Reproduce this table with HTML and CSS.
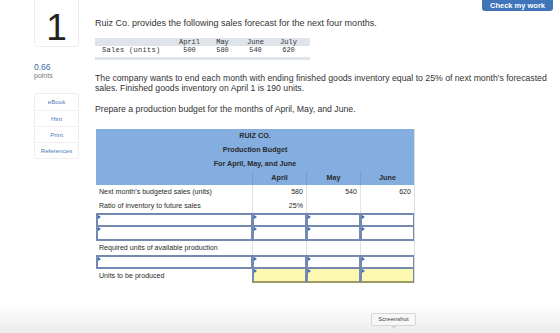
FILE: index.html
```html
<!DOCTYPE html>
<html>
<head>
<meta charset="utf-8">
<link rel="stylesheet" href="styles.css">
</head>
<body>
<div class="page">
  <aside class="side">
    <div class="qnum">1</div>
    <div class="score">0.66</div>
    <div class="pts">points</div>
    <div class="tools">
      <div class="tool">eBook</div>
      <div class="tool">Hint</div>
      <div class="tool">Print</div>
      <div class="tool">References</div>
    </div>
  </aside>
  <main class="main">
    <div class="topbar"><div class="check">Check my work</div></div>
    <p class="p1">Ruiz Co. provides the following sales forecast for the next four months.</p>
    <div class="sales">
      <div class="srow shead"><span></span><span>April</span><span>May</span><span>June</span><span>July</span></div>
      <div class="srow"><span class="sl">Sales (units)</span><span>500</span><span>580</span><span>540</span><span>620</span></div>
      <div class="sbar"></div>
    </div>
    <p class="p2">The company wants to end each month with ending finished goods inventory equal to 25% of next month's forecasted sales. Finished goods inventory on April 1 is 190 units.</p>
    <p class="p3">Prepare a production budget for the months of April, May, and June.</p>
    <div class="budget">
      <div class="title">RUIZ CO.</div>
      <div class="title">Production Budget</div>
      <div class="title">For April, May, and June</div>
      <div class="brow bhead"><div class="c lab"></div><div class="c">April</div><div class="c">May</div><div class="c">June</div></div>
      <div class="brow"><div class="c lab">Next month's budgeted sales (units)</div><div class="c num">580</div><div class="c num">540</div><div class="c num">620</div></div>
      <div class="brow"><div class="c lab">Ratio of inventory to future sales</div><div class="c num">25%</div><div class="c"></div><div class="c"></div></div>
      <div class="brow"><div class="c lab inp"></div><div class="c inp"></div><div class="c inp"></div><div class="c inp"></div></div>
      <div class="brow"><div class="c lab inp"></div><div class="c inp"></div><div class="c inp"></div><div class="c inp"></div></div>
      <div class="brow"><div class="c lab">Required units of available production</div><div class="c"></div><div class="c"></div><div class="c"></div></div>
      <div class="brow"><div class="c lab inp"></div><div class="c inp"></div><div class="c inp"></div><div class="c inp"></div></div>
      <div class="brow"><div class="c lab">Units to be produced</div><div class="c inp yel"></div><div class="c inp yel"></div><div class="c inp yel"></div></div>
    </div>
  </main>
</div>
<div class="fade"></div>
<div class="shot">Screenshot</div>
</body>
</html>
```

FILE: styles.css
```css
* { box-sizing: border-box; }
html, body { margin: 0; padding: 0; background: #fff; }
body { font-family: "Liberation Sans", Arial, sans-serif; color: #333; width: 560px; height: 333px; overflow: hidden; }
.page { display: flex; }
.side { width: 95px; flex: none; padding-left: 34px; }
.qnum {
  width: 45px; height: 54px; margin-top: -7px;
  border: 1px solid #eee; border-radius: 4px;
  font-size: 37px; line-height: 52px; text-align: center; color: #222;
  padding-top: 8px;
}
.score { margin-top: 15px; font-size: 8.5px; color: #3a6aa5; line-height: 10px; }
.pts { font-size: 7px; color: #777; line-height: 8px; }
.tools { margin-top: 13px; width: 45px; border: 1px solid #eee; border-radius: 3px; }
.tool { height: 16px; line-height: 16px; font-size: 6.2px; color: #4a7ab8; text-align: center; border-top: 1px solid #f0f0f0; }
.tool:first-child { border-top: none; }
.main { flex: 1; }
.topbar { display: flex; justify-content: flex-end; padding-right: 7px; height: 11px; }
.check {
  width: 71px; height: 18px; margin-top: -7px;
  background: #3f74b9; border-radius: 3px; color: #fff; font-weight: bold;
  font-size: 7.5px; text-align: center; line-height: 17px; padding-top: 4px;
}
p { margin: 0; font-size: 8.7px; line-height: 10px; }
.p1 { margin-top: 7px; font-size: 9px; }
.sales { margin-top: 10px; width: 215px; font-family: "Liberation Mono", "Courier New", monospace; font-size: 7px; color: #333; }
.srow { display: grid; grid-template-columns: 78px 33px 33px 33px 33px; height: 9px; line-height: 9px; }
.srow span { text-align: center; }
.srow span.sl { text-align: left; padding-left: 7px; letter-spacing: 0.3px; }
.shead { background: #dfe3ea; height: 8px; line-height: 8px; }
.sbar { height: 3px; background: #dfe3ea; margin-top: 2px; }
.p2 { margin-top: 13px; width: 460px; }
.p3 { margin-top: 11px; }
.budget { margin-top: 15px; margin-left: 1px; width: 319px; font-size: 7.1px; color: #2a2a2a; border-right: 1px solid #ddd; }
.title { background: #84aee0; height: 14px; line-height: 14px; text-align: center; font-weight: bold; font-size: 7.2px; }
.brow { display: grid; grid-template-columns: 156px 54px 54px 54px; height: 14px; }
.bhead { background: #84aee0; font-weight: bold; font-size: 7.2px; }
.bhead .c { text-align: center; border-left: 1px solid #7a9ccc; line-height: 14px; }
.bhead .c.lab { border-left: none; }
.c { line-height: 14px; border-left: 1px solid #e2e2e2; position: relative; }
.c.lab { padding-left: 3px; border-left: none; }
.c.num { text-align: right; padding-right: 3px; }
.c.inp { border: 2px solid #7389b0; border-right-width: 1px; background: #fff; }
.c.inp::before { content: ""; position: absolute; left: 0; top: 0; border-top: 2px solid transparent; border-bottom: 2px solid transparent; border-left: 3px solid #3d6dc0; }
.brow:has(.inp) + .brow:has(.inp) .c.inp { border-top-width: 0; }
.c.yel { background: #fdf8b0; border-bottom-color: #9e9a66; }
.fade { position: fixed; left: 0; right: 0; bottom: 0; height: 28px; background: linear-gradient(to bottom, rgba(240,240,240,0), #ececec); }
.shot {
  position: fixed; left: 371px; top: 313px; width: 45px; height: 13px;
  background: #f7f7f7; border: 1px solid #d6d6d6; border-radius: 2px;
  font-size: 6px; color: #444; text-align: center; line-height: 11px;
}
.shot::after { content: ""; position: absolute; left: 19px; bottom: -4px; border-left: 3px solid transparent; border-right: 3px solid transparent; border-top: 3px solid #d6d6d6; }
```
